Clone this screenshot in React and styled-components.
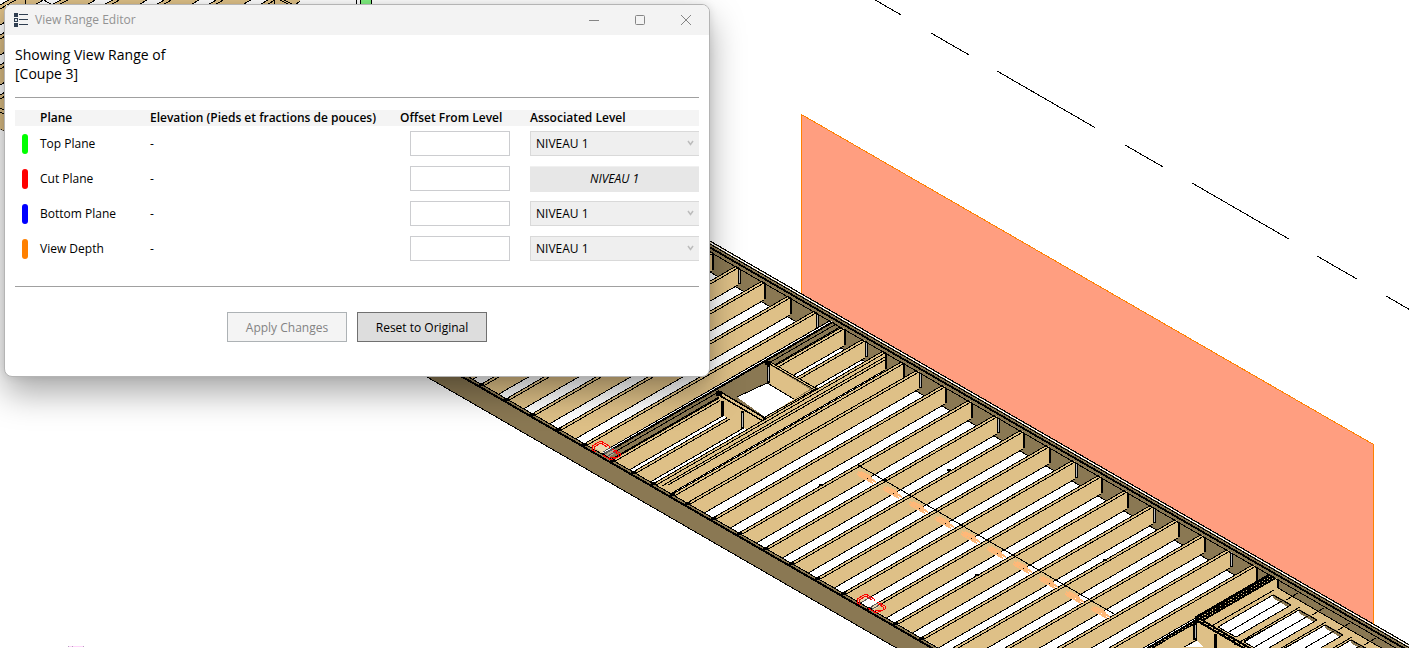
import React from 'react';
import styled, { createGlobalStyle } from 'styled-components';

const GlobalStyle = createGlobalStyle`
  * { box-sizing: border-box; }
  body {
    margin: 0;
    background: #fff;
    color: #000;
    font-family: 'Segoe UI', 'Open Sans', 'Noto Sans', sans-serif;
    font-size: 12px;
    line-height: 16px;
  }
`;

const Stage = styled.main`
  position: relative;
  min-height: 100vh;
  overflow: hidden;
  padding: 4px;
`;

const Backdrop = styled.svg`
  position: absolute;
  inset: 0;
  width: 100%;
  height: 100%;
`;

const Dialog = styled.section`
  position: relative;
  width: 706px;
  max-width: 100%;
  border: 1px solid #b4b4b4;
  border-radius: 8px;
  background: #fff;
  box-shadow: 0 16px 34px rgba(0, 0, 0, 0.34), 0 0 8px rgba(0, 0, 0, 0.1);
  overflow: hidden;
`;

const TitleBar = styled.header`
  display: flex;
  align-items: center;
  height: 30px;
  padding-left: 9px;
  background: #f3f3f3;
  color: #929292;
`;

const TitleIcon = styled.svg`
  width: 14px;
  height: 14px;
  margin-right: 7px;
`;

const Title = styled.h1`
  flex: 1;
  margin: 0;
  font-size: 12px;
  font-weight: 400;
`;

const CaptionButton = styled.button`
  display: grid;
  place-items: center;
  width: 46px;
  height: 28px;
  padding: 0;
  border: 0;
  background: transparent;
  color: #858585;
`;

const Content = styled.div`
  padding: 10px 10px 34px;
`;

const Intro = styled.p`
  margin: 0;
  font-size: 14px;
  line-height: 19px;
`;

const Rule = styled.hr`
  height: 1px;
  margin: ${(p) => p.$space};
  border: 0;
  background: #a0a0a0;
`;

const PlaneTable = styled.table`
  width: 100%;
  table-layout: fixed;
  border-collapse: collapse;
`;

const Col = styled.col`
  width: ${(p) => p.$w};
`;

const HeadCell = styled.th`
  height: 16px;
  padding: 0;
  background: #f4f4f4;
  text-align: left;
  font-weight: 600;
  white-space: nowrap;
`;

const Row = styled.tr`
  height: 35px;
`;

const Cell = styled.td`
  padding: 0;
  vertical-align: middle;
`;

const NameCell = styled.th`
  padding: 0;
  text-align: left;
  font-weight: 400;
`;

const Swatch = styled.span`
  display: block;
  width: 6px;
  height: 20px;
  margin-left: 7px;
  border-radius: 3px;
  background: ${(p) => p.$color};
`;

const OffsetInput = styled.input`
  display: block;
  width: 100px;
  height: 25px;
  margin-left: 10px;
  border: 1px solid #cccdd0;
  background: #fff;
  font: inherit;
`;

const SelectWrap = styled.div`
  position: relative;
`;

const LevelSelect = styled.select`
  display: block;
  width: 100%;
  height: 25px;
  padding: 0 5px;
  border: 1px solid #d9d9d9;
  border-right: 0;
  border-radius: 0;
  appearance: none;
  background: #efefef;
  color: #000;
  font: inherit;
  opacity: 1;
`;

const Chevron = styled.svg`
  position: absolute;
  top: 9px;
  right: 5px;
  width: 7px;
  height: 6px;
  pointer-events: none;
`;

const FixedLevel = styled.div`
  height: 26px;
  border-top: 1px solid #f0f0f0;
  background: #e7e7e7;
  text-align: center;
  font-style: italic;
  line-height: 24px;
`;

const Actions = styled.div`
  display: flex;
  justify-content: center;
  gap: 10px;
`;

const ActionButton = styled.button`
  width: ${(p) => p.$w};
  height: 30px;
  padding: 1px 0 0;
  border: 1px solid #707070;
  background: #ddd;
  color: #000;
  font: inherit;

  &:disabled {
    border-color: #adb2b5;
    background: #f4f4f4;
    color: #838383;
  }
`;

const PLANES = [
  { name: 'Top Plane', color: '#00ff00', level: 'select' },
  { name: 'Cut Plane', color: '#ff0000', level: 'fixed' },
  { name: 'Bottom Plane', color: '#0000ff', level: 'select' },
  { name: 'View Depth', color: '#ff8000', level: 'select' },
];

/* Floor framing seen in isometric projection. */
const S = 0.5774;
const TAN = '#dec087';
const BROWN = '#8a7853';
const rail = (x) => 241 + S * (x - 710);
const sill = (x) => 428 + S * (x - 557);
const seg = (x1, y1, x2, y2) => `M${x1} ${y1}L${x2} ${y2}`;
const along = (fn, x1, x2, d) => seg(x1, fn(x1) + d, x2, fn(x2) + d);
const band = (fn, x1, x2, a, b) =>
  `${x1},${fn(x1) + a} ${x2},${fn(x2) + a} ${x2},${fn(x2) + b} ${x1},${fn(x1) + b}`;
const footX = (x, y) => (y + S * x - 428 + S * 557) / (2 * S);

const JOISTS = [
  [660, 221], [686, 236], [712, 251], [738, 265], [764, 280], [790, 295], [816, 310],
  [844, 326], [865, 338], [885, 350], [903, 361], [919, 369], [945, 384], [971, 399],
  [997, 414], [1023, 429], [1049, 444], [1075, 459], [1101, 474], [1127, 489],
  [1153, 504], [1178, 518], [1204, 533], [1230, 548], [1256, 563],
];

function Joist({ x, y, i }) {
  const fx = footX(x, y) - 12;
  const fy = y + S * (x - fx);
  const gray = i % 3 === 0;
  return (
    <g>
      <polygon points={`${x},${y} ${fx},${fy} ${fx},${fy + 20} ${x},${y + 20}`} fill={TAN} />
      <path
        d={seg(x, y, fx, fy) + seg(x, y + 3, fx, fy + 3) + seg(x, y + 20, fx, fy + 20)}
        stroke="#000"
      />
      <rect x={x} y={y + 2} width={gray ? 3 : 2} height="17" fill="#000" />
      {gray && <rect x={x + 1} y={y + 4} width="1" height="14" fill="#bbb" />}
      <rect x={x - 3} y={y - 1} width="5" height="3" fill="#000" />
    </g>
  );
}

function DarkBeam() {
  return (
    <g>
      <polygon points="838,318 838,337 600,474 600,455" fill={BROWN} />
      <path d="M838 316L603 452M838 318L603 454" stroke="#000" strokeWidth="1" />
      <path d="M836 318.500L603 453" stroke="#fff" />
      <path d="M838 319L603 454.500" stroke="#000" strokeWidth="2" />
      <path d="M838 323L606 457M840 327L610 460" stroke="#000" />
    </g>
  );
}

function Opening() {
  return (
    <g>
      <polygon points="717,392 768,362 817,390 764,420" fill={BROWN} />
      <polygon points="768,364 810,389 794,399 767,383" fill={TAN} />
      <polygon points="794,399 817,387 822,389 769,420 765,417" fill={TAN} />
      <polygon points="737,397 767,383 794,399 765,417" fill="#fff" />
      <path d="M737 397L767 383L794 399M765 417L817 388" stroke="#000" />
      <path d="M768 362L817 390" stroke="#000" strokeWidth="3" />
      <path d="M770 363L815 389" stroke={TAN} />
      <rect x="767" y="365" width="3" height="18" fill="#000" />
      <rect x="768" y="367" width="1" height="14" fill="#bbb" />
      <polygon points="719,396 764,420 748,430 724,416" fill={TAN} />
      <path d="M717 392L765 420" stroke="#000" strokeWidth="5" />
      <path d="M719 393L763 419" stroke={TAN} strokeWidth="2" />
      <rect x="721" y="401" width="3" height="15" fill="#000" />
      <rect x="741" y="411" width="3" height="18" fill="#000" />
      <rect x="742" y="413" width="1" height="14" fill="#bbb" />
      <path d="M716 391h6v5h-6zM765 361h6v4h-6z" fill="#000" />
    </g>
  );
}

function Landing() {
  return (
    <g>
      <polygon points="1278,574 1409,650 1409,670 1110,670" fill={BROWN} />
      <polygon points="1278,576 1278,588 1388,652 1140,652" fill={TAN} />
      <path d="M1278 588L1390 653M1274 590L1210 627" stroke="#000" />
      {[[0, 0], [26, 15], [52, 30], [78, 45]].map(([dx, dy]) => (
        <g key={dx} transform={`translate(${dx} ${dy})`}>
          <polygon points="1273,595 1291,605 1236,637 1218,627" fill="#fff" />
          <polygon points="1273,594 1291,604 1288,607 1273,598" fill={BROWN} />
          <path d="M1218 627L1273 595L1291 605L1236 637ZM1282 601L1227 633" stroke="#000" />
          <path d="M1300 607L1214 657M1298 593L1286 600M1244 641L1300 610" stroke="#000" />
        </g>
      ))}
      <path d="M1278 573L1197 620" stroke="#000" strokeWidth="8" />
      <path d="M1278 572L1197 619M1278 575L1197 622" stroke={TAN} strokeDasharray="1 2" />
      <path d="M1200 619L1110 671" stroke="#000" strokeWidth="4" />
      <path d="M1200 619L1110 671" stroke={TAN} strokeDasharray="1 3" />
      <polygon points="1197,623 1240,648 1170,648 1165,641" fill={TAN} />
      <path d="M1197 619L1250 650" stroke="#000" strokeWidth="5" />
      <path d="M1199 620L1250 650" stroke={TAN} strokeDasharray="4 2" />
      <path d="M1193 623h4v17h-4zM1214 634h3v14h-3zM1277 575h2v13h-2z" fill="#000" />
      <path d="M1195 625v13" stroke="#bbb" />
      <polygon points="1184,647 1197,641 1203,647" fill="#fff" />
      <path d="M1184 647L1197 640" stroke="#000" />
    </g>
  );
}

function OldFraming() {
  return (
    <g>
      <clipPath id="corner">
        <polygon points="0,0 300,0 300,5 6,5 6,132 0,129" />
      </clipPath>
      <g clipPath="url(#corner)">
        {[-2, -1, 0, 1, 2, 3].map((k) => {
          const c = 65 + 30 * k;
          return (
            <g key={k}>
              <polygon points={`0,${c} 320,${c - 185} 320,${c - 165} 0,${c + 20}`} fill={TAN} />
              <path
                d={seg(0, c, 320, c - 185) + seg(0, c + 4, 320, c - 181) + seg(0, c + 20, 320, c - 165)}
                stroke="#000"
              />
            </g>
          );
        })}
        <polygon points="0,108 6,106 6,132 0,129" fill={TAN} />
        <path d="M0 108L6 111M0 112L6 115M0 129L6 132M44 0L52 5M284 0L294 5M280 0L290 5" stroke="#000" />
        <path d="M25.500 0v5M274 0v5" stroke="#000" />
      </g>
      <path d="M356.500 0v5M371.500 0v5" stroke="#000" />
      <rect x="360" y="-1" width="11" height="8" fill="#80f080" stroke="#000" />
    </g>
  );
}

function RedMark({ x, y }) {
  return (
    <g transform={`translate(${x} ${y})`} stroke="#f00" fill="none">
      <polygon points="2,5 10,0 26,9 17,15" fill="#fff" fillOpacity="0.35" stroke="none" />
      <path d="M0 8V4L9 -1L17 4V6M2 8L2 5L9 1L15 5M0 8L4 10" />
      <path d="M20 7L28 11V14L19 18L11 13M21 9L26 12V15L18 16M24 8V12" />
    </g>
  );
}

function FramingScene() {
  const guide = [
    [870, -3, 901], [931, 33, 969], [997, 71, 1095], [1125, 145, 1163],
    [1192, 183, 1289], [1317, 256, 1357], [1386, 296, 1409],
  ];
  return (
    <Backdrop
      viewBox="0 0 1409 648"
      preserveAspectRatio="xMinYMin slice"
      shapeRendering="crispEdges"
      fill="none"
      aria-hidden="true"
    >
      <OldFraming />
      <path d={guide.map(([x, y, e]) => seg(x, y, e, y + S * (e - x))).join('')} stroke="#000" />
      <polygon
        points="801.5,114.5 1373.5,444.5 1373.5,640 801.5,310"
        fill="#ff9e80"
        stroke="#ff8000"
      />
      <clipPath id="floor">
        <polygon points="640,201 1409,645 1409,700 1040,706 420,349" />
      </clipPath>
      <g clipPath="url(#floor)">
        <polygon points="640,201 1409,645 1409,700 1040,706 420,349" fill="#fff" />
        <polygon points={band(rail, 640, 1409, 2, 31)} fill={BROWN} />
        <path d={along(rail, 640, 1280, 31)} stroke="#000" />
        {JOISTS.slice(0, 7).map(([x, y], i) => <Joist key={x} x={x} y={y} i={i} />)}
        <DarkBeam />
        {JOISTS.slice(7, 9).map(([x, y], i) => <Joist key={x} x={x} y={y} i={i + 2} />)}
        <Opening />
        {JOISTS.slice(9).map(([x, y], i) => <Joist key={x} x={x} y={y} i={i + 1} />)}
        <path d="M885 357L662 486M885 360L668 485" stroke="#000" />
        <Landing />
      </g>
      <polygon points={band(rail, 640, 1409, 0, 10)} fill={BROWN} />
      <path
        d={along(rail, 640, 1409, 1.5)}
        stroke="#fff"
        strokeWidth="1"
      />
      <path
        d={along(rail, 640, 1409, 0) + along(rail, 640, 1409, 3) + along(rail, 640, 1409, 6) + along(rail, 640, 1409, 7) + along(rail, 640, 1409, 11)}
        stroke="#000"
      />
      <polygon points={band(sill, 400, 1000, 0, 24)} fill={BROWN} />
      <path d={along(sill, 400, 1000, 0) + along(sill, 400, 1000, 24)} stroke="#000" />
      <path d={along(sill, 400, 1000, 3.5)} stroke="#000" strokeWidth="2" />
      {JOISTS.map(([x, y]) => {
        const fx = Math.round(footX(x, y));
        return <rect key={x} x={fx - 2} y={Math.round(sill(fx)) - 1} width="5" height="3" fill="#000" />;
      })}
      <g stroke="#ffb878">
        {[0, 1, 2, 3, 4, 5, 6, 7, 8, 9].map((n) => (
          <g key={n} transform={`translate(${n * 26} ${n * 15})`}>
            <path d="M858 472L876 482M857 474L873 483M861 472L872 478" strokeWidth="2" />
          </g>
        ))}
      </g>
      <path d="M858 465L1116 615" stroke="#000" />
      <path d="M819 485h4M883 480h4M947 470h4M1103 560h4M975 575h4" stroke="#000" strokeWidth="2" />
      <RedMark x={592} y={442} />
      <RedMark x={857} y={595} />
      <path d="M68 646.500h16" stroke="#ffd5fa" />
      <path d="M68 646.500h1M72 646.500h1M83 646.500h1" stroke="#b8a0c0" />
    </Backdrop>
  );
}

export default function App() {
  return (
    <>
      <GlobalStyle />
      <Stage>
        <FramingScene />
        <Dialog aria-label="View Range Editor">
          <TitleBar>
            <TitleIcon viewBox="0 0 14 14" shapeRendering="crispEdges" aria-hidden="true">
              <path d="M0 0h4v4H0zM0 5h4v4H0zM0 10h4v4H0z" fill="#2f3e50" />
              <path d="M1 6h2v2H1z" fill="#dfe6ea" />
              <path d="M5 1h9v1H5zM5 6h9v1H5zM5 11h9v1H5z" fill="#2f3e50" />
            </TitleIcon>
            <Title>View Range Editor</Title>
            <CaptionButton type="button" aria-label="Minimize">
              <svg width="11" height="11"><path d="M0 5.500h10" stroke="currentColor" /></svg>
            </CaptionButton>
            <CaptionButton type="button" aria-label="Maximize">
              <svg width="11" height="11">
                <rect x="0.500" y="0.500" width="9" height="9" rx="1" fill="none" stroke="currentColor" />
              </svg>
            </CaptionButton>
            <CaptionButton type="button" aria-label="Close">
              <svg width="11" height="11"><path d="M0 0L10 10M10 0L0 10" stroke="currentColor" /></svg>
            </CaptionButton>
          </TitleBar>
          <Content>
            <Intro>
              Showing View Range of
              <br />
              [Coupe 3]
            </Intro>
            <Rule $space="14px 0 12px" />
            <PlaneTable>
              <colgroup>
                <Col $w="25px" />
                <Col $w="110px" />
                <Col $w="250px" />
                <Col $w="130px" />
                <Col />
              </colgroup>
              <thead>
                <tr>
                  <HeadCell aria-label="Color" />
                  <HeadCell scope="col">Plane</HeadCell>
                  <HeadCell scope="col">Elevation (Pieds et fractions de pouces)</HeadCell>
                  <HeadCell scope="col">Offset From Level</HeadCell>
                  <HeadCell scope="col">Associated Level</HeadCell>
                </tr>
              </thead>
              <tbody>
                {PLANES.map((plane) => (
                  <Row key={plane.name}>
                    <Cell><Swatch $color={plane.color} /></Cell>
                    <NameCell scope="row">{plane.name}</NameCell>
                    <Cell>-</Cell>
                    <Cell><OffsetInput type="text" aria-label={`${plane.name} offset from level`} /></Cell>
                    <Cell>
                      {plane.level === 'fixed' ? (
                        <FixedLevel>NIVEAU 1</FixedLevel>
                      ) : (
                        <SelectWrap>
                          <LevelSelect disabled aria-label={`${plane.name} associated level`}>
                            <option>NIVEAU 1</option>
                          </LevelSelect>
                          <Chevron viewBox="0 0 7 6" aria-hidden="true">
                            <path d="M1 1L3.500 4.500L6 1" fill="none" stroke="#bcbcbc" strokeWidth="1.500" />
                          </Chevron>
                        </SelectWrap>
                      )}
                    </Cell>
                  </Row>
                ))}
              </tbody>
            </PlaneTable>
            <Rule $space="20px 0 25px" />
            <Actions>
              <ActionButton type="button" $w="120px" disabled>Apply Changes</ActionButton>
              <ActionButton type="button" $w="130px">Reset to Original</ActionButton>
            </Actions>
          </Content>
        </Dialog>
      </Stage>
    </>
  );
}
